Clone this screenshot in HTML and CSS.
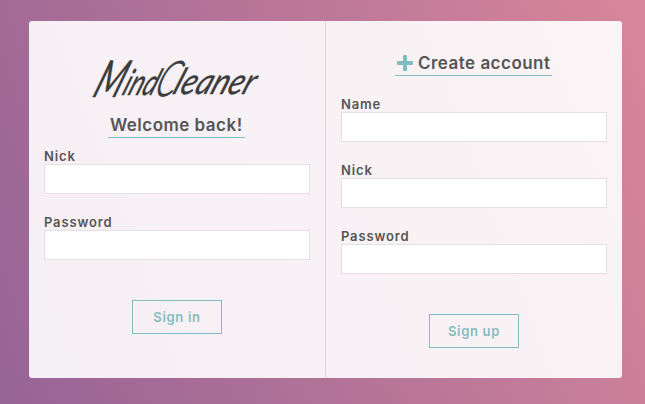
FILE: index.html
```html
<!DOCTYPE html>
<html lang="en">
<head>
<meta charset="utf-8">
<title>MindCleaner</title>
<link rel="stylesheet" href="styles.css">
</head>
<body>
<main class="card">
  <section class="panel sign-in">
    <svg class="logo" width="170" height="46" viewBox="0 0 170 46" role="img" aria-label="MindCleaner">
      <g transform="translate(2 40) skewX(-22)">
        <text class="logo-cap" x="-2" y="0" textLength="28" lengthAdjust="spacingAndGlyphs">M</text>
        <text class="logo-low" x="27" y="-2" textLength="33" lengthAdjust="spacingAndGlyphs">ind</text>
        <text class="logo-cap logo-thin" x="59" y="-1" textLength="20" lengthAdjust="spacingAndGlyphs">C</text>
        <text class="logo-low" x="77" y="-3" textLength="80" lengthAdjust="spacingAndGlyphs">leaner</text>
      </g>
    </svg>
    <h2 class="title welcome"><span>Welcome back!</span></h2>
    <form>
      <label class="field"><span>Nick</span><input type="text"></label>
      <label class="field"><span>Password</span><input type="password"></label>
      <button type="button">Sign in</button>
    </form>
  </section>
  <section class="panel sign-up">
    <h2 class="title create">
      <svg width="16" height="16" viewBox="0 0 16 16" aria-hidden="true"><rect x="6" y="0" width="4" height="16" rx="1"/><rect x="0" y="6" width="16" height="4" rx="1"/></svg>
      <span>Create account</span>
    </h2>
    <form>
      <label class="field"><span>Name</span><input type="text"></label>
      <label class="field"><span>Nick</span><input type="text"></label>
      <label class="field"><span>Password</span><input type="password"></label>
      <button type="button">Sign up</button>
    </form>
  </section>
</main>
</body>
</html>
```

FILE: styles.css
```css
* { box-sizing: border-box; }
body {
  margin: 0;
  height: 404px;
  padding: 21px 23px 26px 29px;
  overflow: hidden;
  background: linear-gradient(70deg, #966496, #d8869a);
  color: #555;
  font-family: Inter, "Liberation Sans", sans-serif;
  font-weight: 600;
}
.card {
  display: grid;
  grid-template-columns: 297px 296px;
  height: 357px;
  border-radius: 3px;
  background: rgba(255, 255, 255, .9);
}
.panel {
  display: flex;
  flex-direction: column;
  align-items: center;
}
.sign-in { border-right: 1px solid #dcd8dc; padding-top: 36px; }
.sign-up { padding-top: 30px; }
.logo { display: block; margin-right: 2px; overflow: visible; }
.logo text {
  fill: #3b3b3b;
  stroke: #3b3b3b;
  stroke-width: .35px;
  font-family: Lato, "Liberation Sans", sans-serif;
  font-style: italic;
  font-weight: 400;
}
.logo-cap { font-size: 51px; }
.logo-low { font-size: 36px; }
.logo .logo-thin { font-size: 49px; font-weight: 300; stroke-width: .9px; }
.title {
  display: flex;
  align-items: center;
  justify-content: center;
  height: 25px;
  border-bottom: 1px solid #83bcc0;
  font-size: 17px;
  letter-spacing: .48px;
  line-height: 24px;
  font-weight: 600;
  white-space: nowrap;
}
.title span { margin-right: -.48px; }
.welcome { width: 137px; margin: 10px 2px 11px 0; }
.create { width: 157px; gap: 5px; margin: 0 1px 21px 0; }
.create svg { flex: none; fill: #83bcc0; }
form {
  display: flex;
  flex-direction: column;
  align-items: center;
}
.field {
  display: block;
  width: 266px;
  height: 45px;
  margin-bottom: 21px;
  font-size: 13px;
  letter-spacing: .85px;
  line-height: 14px;
}
.field span { display: block; height: 15px; }
input {
  display: block;
  width: 266px;
  height: 30px;
  padding: 0 8px;
  border: 1px solid #e2e2e4;
  background: #fff;
}
button {
  width: 90px;
  height: 34px;
  margin-top: 19px;
  padding: 0;
  border: 1px solid #83bcc0;
  background: transparent;
  color: #83bcc0;
  font: 600 13px/32px Inter, "Liberation Sans", sans-serif;
  letter-spacing: .7px;
}
```
